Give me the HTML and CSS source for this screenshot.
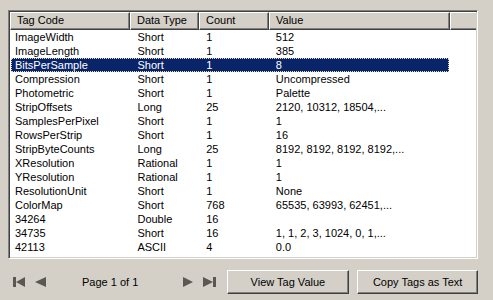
FILE: index.html
```html
<!DOCTYPE html>
<html>
<head>
  <meta charset="UTF-8">
  <title>Tag Viewer</title>
  <link rel="stylesheet" href="styles.css">
</head>
<body>
  <div class="panel">
    <div class="listbox">
      <div class="head">
        <div class="hcell c1">Tag Code</div>
        <div class="hcell c2">Data Type</div>
        <div class="hcell c3">Count</div>
        <div class="hcell c4">Value</div>
        <div class="hcell c5"></div>
      </div>
      <div class="rows">
        <div class="row"><span class="c1">ImageWidth</span><span class="c2">Short</span><span class="c3">1</span><span class="c4">512</span></div>
        <div class="row"><span class="c1">ImageLength</span><span class="c2">Short</span><span class="c3">1</span><span class="c4">385</span></div>
        <div class="row selected"><span class="c1">BitsPerSample</span><span class="c2">Short</span><span class="c3">1</span><span class="c4">8</span></div>
        <div class="row"><span class="c1">Compression</span><span class="c2">Short</span><span class="c3">1</span><span class="c4">Uncompressed</span></div>
        <div class="row"><span class="c1">Photometric</span><span class="c2">Short</span><span class="c3">1</span><span class="c4">Palette</span></div>
        <div class="row"><span class="c1">StripOffsets</span><span class="c2">Long</span><span class="c3">25</span><span class="c4">2120, 10312, 18504,...</span></div>
        <div class="row"><span class="c1">SamplesPerPixel</span><span class="c2">Short</span><span class="c3">1</span><span class="c4">1</span></div>
        <div class="row"><span class="c1">RowsPerStrip</span><span class="c2">Short</span><span class="c3">1</span><span class="c4">16</span></div>
        <div class="row"><span class="c1">StripByteCounts</span><span class="c2">Long</span><span class="c3">25</span><span class="c4">8192, 8192, 8192, 8192,...</span></div>
        <div class="row"><span class="c1">XResolution</span><span class="c2">Rational</span><span class="c3">1</span><span class="c4">1</span></div>
        <div class="row"><span class="c1">YResolution</span><span class="c2">Rational</span><span class="c3">1</span><span class="c4">1</span></div>
        <div class="row"><span class="c1">ResolutionUnit</span><span class="c2">Short</span><span class="c3">1</span><span class="c4">None</span></div>
        <div class="row"><span class="c1">ColorMap</span><span class="c2">Short</span><span class="c3">768</span><span class="c4">65535, 63993, 62451,...</span></div>
        <div class="row"><span class="c1">34264</span><span class="c2">Double</span><span class="c3">16</span><span class="c4"></span></div>
        <div class="row"><span class="c1">34735</span><span class="c2">Short</span><span class="c3">16</span><span class="c4">1, 1, 2, 3, 1024, 0, 1,...</span></div>
        <div class="row"><span class="c1">42113</span><span class="c2">ASCII</span><span class="c3">4</span><span class="c4">0.0</span></div>
      </div>
    </div>

    <div class="footer">
      <div class="nav">
        <svg class="ico first" width="12" height="10" viewBox="0 0 12 10"><rect x="0" y="0" width="3" height="10"/><polygon points="3,5 12,0 12,10"/></svg>
        <svg class="ico prev" width="11" height="10" viewBox="0 0 11 10"><polygon points="0,5 11,0 11,10"/></svg>
        <span class="page">Page 1 of 1</span>
        <svg class="ico next" width="10" height="10" viewBox="0 0 10 10"><polygon points="0,0 10,5 0,10"/></svg>
        <svg class="ico last" width="13" height="10" viewBox="0 0 13 10"><polygon points="0,0 10,5 0,10"/><rect x="10" y="0" width="3" height="10"/></svg>
      </div>
      <button class="btn view">View Tag Value</button>
      <button class="btn copy">Copy Tags as Text</button>
    </div>
  </div>
</body>
</html>
```

FILE: styles.css
```css
html, body {
  margin: 0;
  padding: 0;
  background: #d4d0c8;
}
body {
  font-family: "Liberation Sans", Arial, sans-serif;
  font-size: 11px;
  color: #000;
}
.panel {
  padding: 10px 15px 0 8px;
  width: 470px;
}

/* sunken list box */
.listbox {
  height: 249px;
  background: #fff;
  border-top: 1px solid #808080;
  border-left: 1px solid #808080;
  border-right: 1px solid #fff;
  border-bottom: 1px solid #fff;
  box-shadow: inset 1px 1px 0 #404040, inset -1px -1px 0 #d4d0c8;
  padding: 1px;
  box-sizing: border-box;
  overflow: hidden;
}
.head {
  display: flex;
  height: 18px;
}
.hcell {
  box-sizing: border-box;
  height: 18px;
  line-height: 15px;
  padding-left: 6px;
  background: #d4d0c8;
  border-top: 1px solid #fff;
  border-left: 1px solid #fff;
  border-right: 1px solid #404040;
  border-bottom: 1px solid #404040;
  box-shadow: inset -1px -1px 0 #808080;
}
.hcell.c5 {
  border-right: none;
  box-shadow: inset 0 -1px 0 #808080;
}
.c1 { width: 120px; }
.c2 { width: 69px; }
.c3 { width: 70px; }
.c4 { width: 181px; }
.c5 { width: 26px; }

.row {
  display: flex;
  height: 14px;
  width: 438px;
  margin-left: 1px;
  box-sizing: border-box;
  border: 1px solid transparent;
}
.row span {
  box-sizing: border-box;
  padding-left: 7px;
  white-space: nowrap;
  overflow: hidden;
  line-height: 12px;
}
.row .c1 { width: 119px; padding-left: 3px; }
.row .c4 { width: 180px; }
.row.selected {
  background: #0a246a;
  color: #fff;
  border: 1px dotted #e8e2a0;
}

/* bottom bar */
.footer {
  display: flex;
  align-items: center;
  margin-top: 11px;
  height: 24px;
}
.nav {
  display: flex;
  align-items: center;
  width: 219px;
}
.ico {
  fill: #5a5852;
}
.first { margin-left: 5px; }
.prev { margin-left: 10px; }
.page { margin-left: 36px; width: 101px; }
.last { margin-left: 10px; }

.btn {
  font-family: "Liberation Sans", Arial, sans-serif;
  font-size: 11px;
  color: #000;
  background: #d4d0c8;
  height: 24px;
  padding: 0;
  border-top: 1px solid #fff;
  border-left: 1px solid #fff;
  border-right: 1px solid #404040;
  border-bottom: 1px solid #404040;
  box-shadow: inset -1px -1px 0 #808080;
}
.view { width: 123px; }
.copy { width: 121px; margin-left: 8px; }
```
